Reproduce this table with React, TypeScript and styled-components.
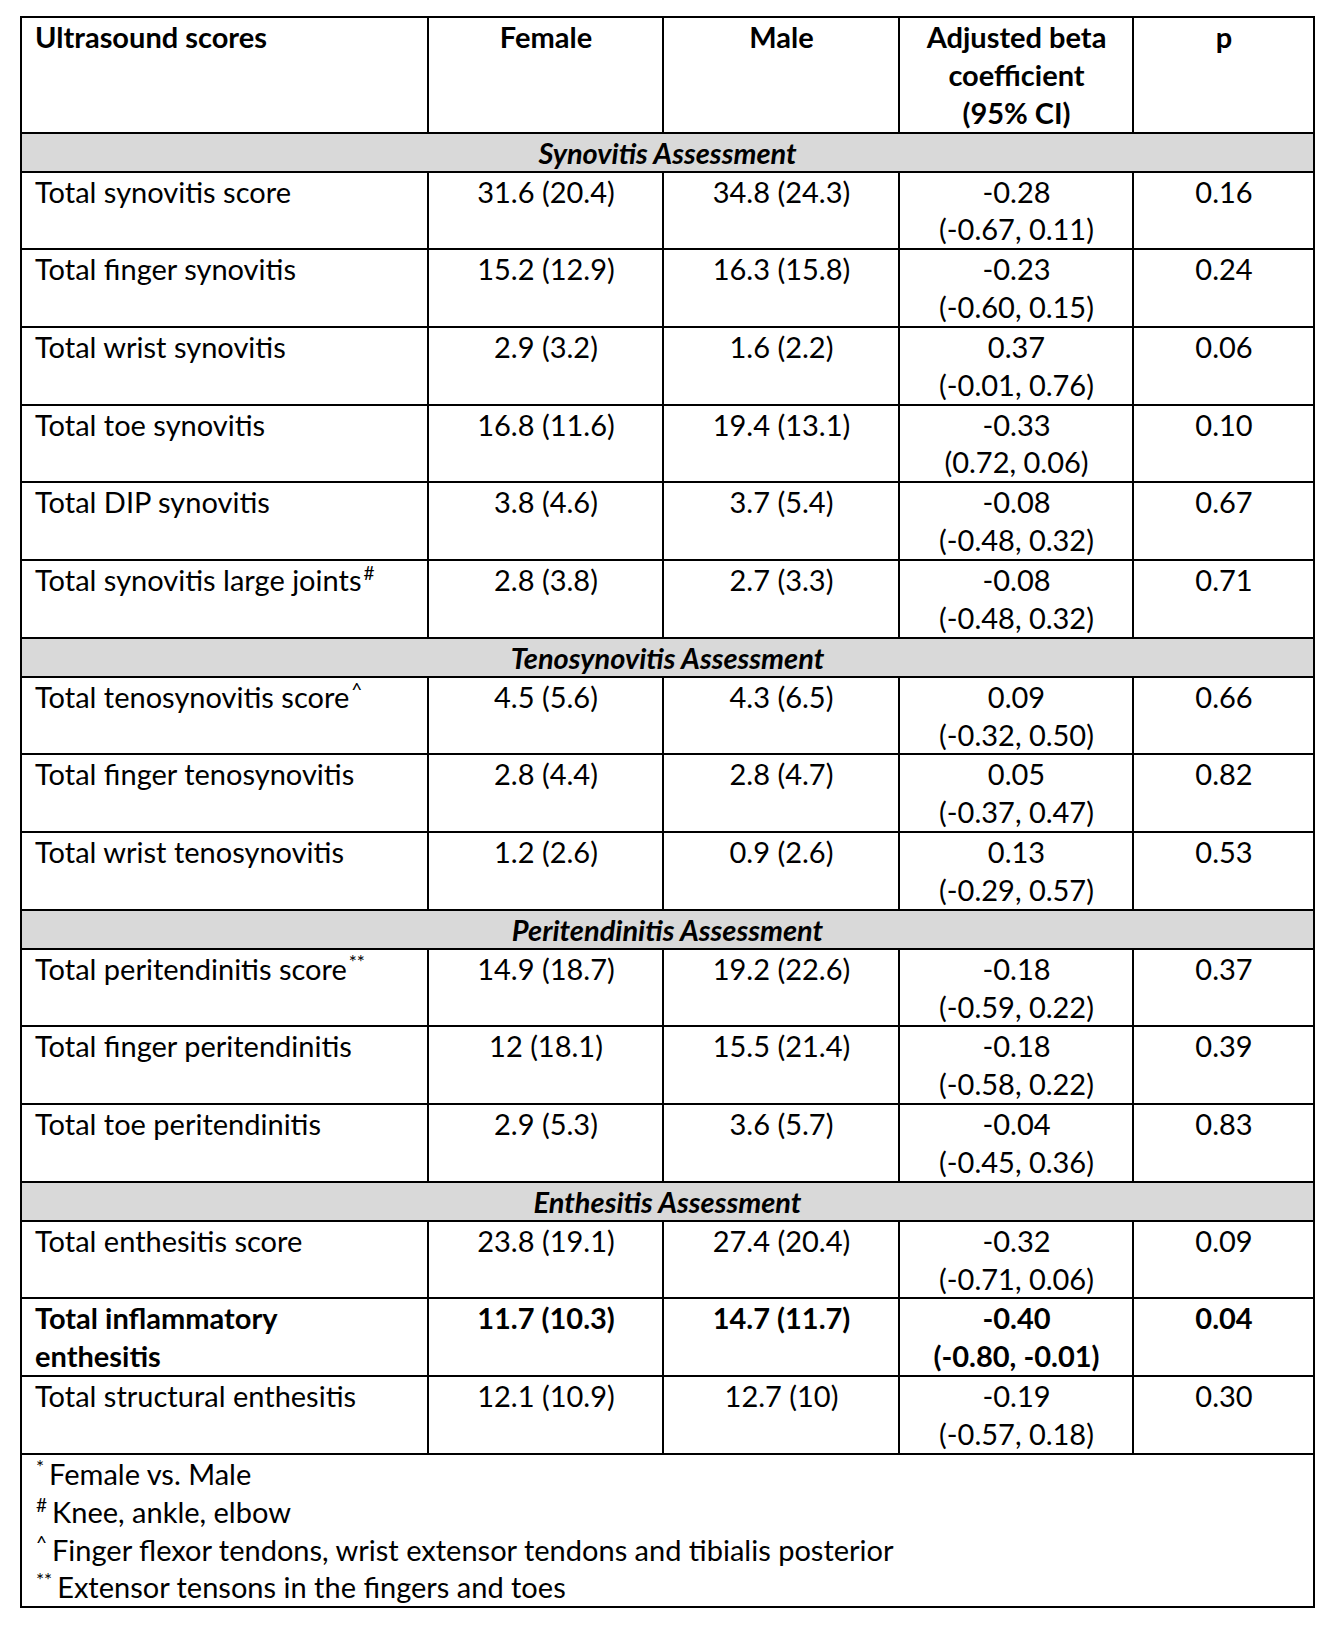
import * as React from 'react';
import styled, { createGlobalStyle } from 'styled-components';

const GlobalStyle = createGlobalStyle`
  html, body {
    margin: 0;
    padding: 0;
    background: #fff;
  }
  body {
    font-family: Lato, "Open Sans", sans-serif;
    color: #000;
  }
`;

const Page = styled.div`
  padding: 16px 19px 18px 20px;
`;

const Table = styled.table`
  width: 1293px;
  border-collapse: collapse;
  table-layout: fixed;
  font-size: 29px;
  line-height: 37.85px;
`;

const Cell = styled.td<{ $align?: 'left' | 'center'; $bold?: boolean }>`
  border: 2px solid #000;
  padding: 0 12px 0 13px;
  vertical-align: top;
  text-align: ${(p) => p.$align || 'center'};
  font-weight: ${(p) => (p.$bold ? 700 : 400)};
`;

const HeadCell = styled.th<{ $align?: 'left' | 'center' }>`
  border: 2px solid #000;
  padding: 0 12px 0 13px;
  vertical-align: top;
  text-align: ${(p) => p.$align || 'center'};
  font-weight: 700;
  height: 112.5px;
`;

const SectionCell = styled.td`
  border: 2px solid #000;
  background: #d9d9d9;
  padding: 0;
  text-align: center;
  font-weight: 700;
  font-style: italic;
  line-height: 37px;
`;

const Line = styled.span`
  display: block;
`;

const Sup = styled.sup`
  font-size: 19px;
  line-height: 0;
  vertical-align: 11px;
  margin-left: 2px;
`;

const FootCell = styled.td`
  border: 2px solid #000;
  padding: 0 13px 0 14px;
  text-align: left;
`;

const FootMark = styled.sup`
  font-size: 19px;
  line-height: 0;
  vertical-align: 11px;
  margin-right: 5px;
`;

type Row = {
  label: string;
  mark?: string;
  female: string;
  male: string;
  beta: string;
  ci: string;
  p: string;
  bold?: boolean;
};

type Section = { title: string; rows: Row[] };

const sections: Section[] = [
  {
    title: 'Synovitis Assessment',
    rows: [
      { label: 'Total synovitis score', female: '31.6 (20.4)', male: '34.8 (24.3)', beta: '-0.28', ci: '(-0.67, 0.11)', p: '0.16' },
      { label: 'Total finger synovitis', female: '15.2 (12.9)', male: '16.3 (15.8)', beta: '-0.23', ci: '(-0.60, 0.15)', p: '0.24' },
      { label: 'Total wrist synovitis', female: '2.9 (3.2)', male: '1.6 (2.2)', beta: '0.37', ci: '(-0.01, 0.76)', p: '0.06' },
      { label: 'Total toe synovitis', female: '16.8 (11.6)', male: '19.4 (13.1)', beta: '-0.33', ci: '(0.72, 0.06)', p: '0.10' },
      { label: 'Total DIP synovitis', female: '3.8 (4.6)', male: '3.7 (5.4)', beta: '-0.08', ci: '(-0.48, 0.32)', p: '0.67' },
      { label: 'Total synovitis large joints', mark: '#', female: '2.8 (3.8)', male: '2.7 (3.3)', beta: '-0.08', ci: '(-0.48, 0.32)', p: '0.71' },
    ],
  },
  {
    title: 'Tenosynovitis Assessment',
    rows: [
      { label: 'Total tenosynovitis score', mark: '^', female: '4.5 (5.6)', male: '4.3 (6.5)', beta: '0.09', ci: '(-0.32, 0.50)', p: '0.66' },
      { label: 'Total finger tenosynovitis', female: '2.8 (4.4)', male: '2.8 (4.7)', beta: '0.05', ci: '(-0.37, 0.47)', p: '0.82' },
      { label: 'Total wrist tenosynovitis', female: '1.2 (2.6)', male: '0.9 (2.6)', beta: '0.13', ci: '(-0.29, 0.57)', p: '0.53' },
    ],
  },
  {
    title: 'Peritendinitis Assessment',
    rows: [
      { label: 'Total peritendinitis score', mark: '**', female: '14.9 (18.7)', male: '19.2 (22.6)', beta: '-0.18', ci: '(-0.59, 0.22)', p: '0.37' },
      { label: 'Total finger peritendinitis', female: '12 (18.1)', male: '15.5 (21.4)', beta: '-0.18', ci: '(-0.58, 0.22)', p: '0.39' },
      { label: 'Total toe peritendinitis', female: '2.9 (5.3)', male: '3.6 (5.7)', beta: '-0.04', ci: '(-0.45, 0.36)', p: '0.83' },
    ],
  },
  {
    title: 'Enthesitis Assessment',
    rows: [
      { label: 'Total enthesitis score', female: '23.8 (19.1)', male: '27.4 (20.4)', beta: '-0.32', ci: '(-0.71, 0.06)', p: '0.09' },
      { label: 'Total inflammatory\nenthesitis', female: '11.7 (10.3)', male: '14.7 (11.7)', beta: '-0.40', ci: '(-0.80, -0.01)', p: '0.04', bold: true },
      { label: 'Total structural enthesitis', female: '12.1 (10.9)', male: '12.7 (10)', beta: '-0.19', ci: '(-0.57, 0.18)', p: '0.30' },
    ],
  },
];

const footnotes = [
  { mark: '*', text: 'Female vs. Male' },
  { mark: '#', text: 'Knee, ankle, elbow' },
  { mark: '^', text: 'Finger flexor tendons, wrist extensor tendons and tibialis posterior' },
  { mark: '**', text: 'Extensor tensons in the fingers and toes' },
];

function DataRow({ row }: { row: Row }) {
  return (
    <tr>
      <Cell $align="left" $bold={row.bold}>
        {row.label.split('\n').map((part) => (
          <Line key={part}>
            {part}
            {row.mark && <Sup>{row.mark}</Sup>}
          </Line>
        ))}
      </Cell>
      <Cell $bold={row.bold}>{row.female}</Cell>
      <Cell $bold={row.bold}>{row.male}</Cell>
      <Cell $bold={row.bold}>
        <Line>{row.beta}</Line>
        <Line>{row.ci}</Line>
      </Cell>
      <Cell $bold={row.bold}>{row.p}</Cell>
    </tr>
  );
}

export default function App() {
  return (
    <Page>
      <GlobalStyle />
      <Table>
        <colgroup>
          <col style={{ width: 407 }} />
          <col style={{ width: 235 }} />
          <col style={{ width: 236 }} />
          <col style={{ width: 234 }} />
          <col style={{ width: 181 }} />
        </colgroup>
        <thead>
          <tr>
            <HeadCell $align="left">Ultrasound scores</HeadCell>
            <HeadCell>Female</HeadCell>
            <HeadCell>Male</HeadCell>
            <HeadCell>
              <Line>Adjusted beta</Line>
              <Line>coefficient</Line>
              <Line>(95% CI)</Line>
            </HeadCell>
            <HeadCell>p</HeadCell>
          </tr>
        </thead>
        <tbody>
          {sections.map((section) => (
            <React.Fragment key={section.title}>
              <tr>
                <SectionCell colSpan={5}>{section.title}</SectionCell>
              </tr>
              {section.rows.map((row) => (
                <DataRow key={row.label} row={row} />
              ))}
            </React.Fragment>
          ))}
          <tr>
            <FootCell colSpan={5}>
              {footnotes.map((note) => (
                <Line key={note.mark}>
                  <FootMark>{note.mark}</FootMark>
                  {note.text}
                </Line>
              ))}
            </FootCell>
          </tr>
        </tbody>
      </Table>
    </Page>
  );
}
